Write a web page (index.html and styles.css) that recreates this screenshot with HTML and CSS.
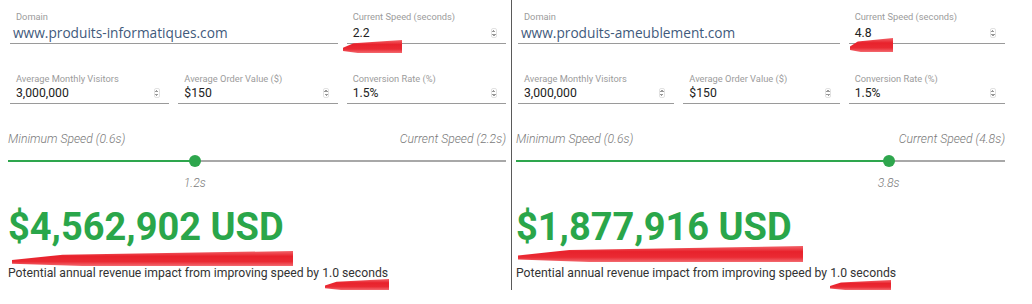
FILE: index.html
```html
<!DOCTYPE html>
<html lang="en">
<head>
    <meta charset="UTF-8">
    <meta name="viewport" content="width=device-width, initial-scale=1.0">
    <title>Speed Revenue Calculator</title>
    <link rel="stylesheet" href="styles.css">
</head>
<body>
    <div class="compare">
        <!-- Site 1 -->
        <section class="panel panel-left">
            <div class="fields">
                <div class="field field-wide">
                    <div class="field-label">Domain</div>
                    <div class="field-value domain">www.produits-informatiques.com</div>
                </div>
                <div class="field">
                    <div class="field-label">Current Speed (seconds)</div>
                    <div class="field-value">2.2 <span class="spin"></span></div>
                </div>
                <div class="field">
                    <div class="field-label">Average Monthly Visitors</div>
                    <div class="field-value">3,000,000 <span class="spin"></span></div>
                </div>
                <div class="field">
                    <div class="field-label">Average Order Value ($)</div>
                    <div class="field-value">$150 <span class="spin"></span></div>
                </div>
                <div class="field">
                    <div class="field-label">Conversion Rate (%)</div>
                    <div class="field-value">1.5% <span class="spin"></span></div>
                </div>
            </div>

            <div class="slider" style="--pos: 37.5%;">
                <div class="slider-ends">
                    <span>Minimum Speed (0.6s)</span>
                    <span>Current Speed (2.2s)</span>
                </div>
                <div class="track">
                    <div class="track-fill"></div>
                    <div class="thumb"></div>
                </div>
                <div class="slider-value"><span>1.2s</span></div>
            </div>

            <div class="impact">$4,562,902 USD</div>
            <p class="impact-note">Potential annual revenue impact from improving speed by 1.0 seconds</p>

            <span class="mark mark-speed"></span>
            <span class="mark mark-impact"></span>
            <span class="mark mark-note"></span>
        </section>

        <!-- Site 2 -->
        <section class="panel panel-right">
            <div class="fields">
                <div class="field field-wide">
                    <div class="field-label">Domain</div>
                    <div class="field-value domain">www.produits-ameublement.com</div>
                </div>
                <div class="field">
                    <div class="field-label">Current Speed (seconds)</div>
                    <div class="field-value">4.8 <span class="spin"></span></div>
                </div>
                <div class="field">
                    <div class="field-label">Average Monthly Visitors</div>
                    <div class="field-value">3,000,000 <span class="spin"></span></div>
                </div>
                <div class="field">
                    <div class="field-label">Average Order Value ($)</div>
                    <div class="field-value">$150 <span class="spin"></span></div>
                </div>
                <div class="field">
                    <div class="field-label">Conversion Rate (%)</div>
                    <div class="field-value">1.5% <span class="spin"></span></div>
                </div>
            </div>

            <div class="slider" style="--pos: 76.2%;">
                <div class="slider-ends">
                    <span>Minimum Speed (0.6s)</span>
                    <span>Current Speed (4.8s)</span>
                </div>
                <div class="track">
                    <div class="track-fill"></div>
                    <div class="thumb"></div>
                </div>
                <div class="slider-value"><span>3.8s</span></div>
            </div>

            <div class="impact">$1,877,916 USD</div>
            <p class="impact-note">Potential annual revenue impact from improving speed by 1.0 seconds</p>

            <span class="mark mark-speed"></span>
            <span class="mark mark-impact"></span>
            <span class="mark mark-note"></span>
        </section>
    </div>
</body>
</html>
```

FILE: styles.css
```css
body {
    margin: 0;
    background-color: #fff;
    font-family: Roboto, "Liberation Sans", sans-serif;
    color: #222;
}
.compare {
    display: flex;
    height: 290px;
}
.panel {
    position: relative;
    overflow: hidden;
    box-sizing: border-box;
    padding-top: 11px;
}
.panel-left {
    width: 512px;
    padding-left: 8px;
    padding-right: 5px;
    border-right: 1px solid #5a5a5a;
}
.panel-right {
    flex: 1;
    padding-left: 4px;
    padding-right: 27px;
}
.fields {
    display: grid;
    grid-template-columns: repeat(3, 1fr);
    column-gap: 9px;
    row-gap: 29px;
    margin-left: 2px;
}
.field {
    border-bottom: 1px solid #9a9a9a;
}
.field-wide {
    grid-column: span 2;
}
.field-label {
    font-size: 9.3px;
    line-height: 12px;
    color: #9c9c9c;
    padding-left: 6px;
}
.field-value {
    display: flex;
    justify-content: space-between;
    align-items: center;
    font-size: 12.2px;
    line-height: 16px;
    padding: 0 0 2px 6px;
}
.fields .field:nth-child(-n+2) .field-value {
    padding-top: 2px;
}
.field-value.domain {
    font-family: "Open Sans", sans-serif;
    font-size: 13.7px;
    color: #3f5a7c;
    padding-left: 3px;
}
.spin {
    width: 4px;
    height: 8px;
    margin-right: 9px;
    border: 1px solid #e2e2e2;
    border-radius: 2px;
    background:
        linear-gradient(135deg, transparent 50%, #9a9a9a 50%) 0 1px / 2px 2px no-repeat,
        linear-gradient(225deg, transparent 50%, #9a9a9a 50%) 2px 1px / 2px 2px no-repeat,
        linear-gradient(45deg, transparent 50%, #9a9a9a 50%) 0 5px / 2px 2px no-repeat,
        linear-gradient(315deg, transparent 50%, #9a9a9a 50%) 2px 5px / 2px 2px no-repeat;
}
.slider {
    margin-top: 28px;
}
.slider-ends {
    display: flex;
    justify-content: space-between;
    font-size: 12.2px;
    line-height: 14px;
    font-style: italic;
    font-weight: 300;
    color: #7a7a7a;
}
.track {
    position: relative;
    height: 2px;
    margin-top: 14px;
    background-color: #a8a8a8;
}
.track-fill {
    width: var(--pos);
    height: 2px;
    background-color: #2ea64d;
}
.thumb {
    position: absolute;
    left: var(--pos);
    top: -5px;
    width: 12px;
    height: 12px;
    margin-left: -6px;
    border-radius: 50%;
    background-color: #2ea64d;
}
.slider-value {
    margin-top: 14px;
    padding-left: var(--pos);
    font-size: 12.2px;
    line-height: 14px;
    font-style: italic;
    font-weight: 300;
    color: #7a7a7a;
}
.slider-value span {
    display: inline-block;
    transform: translateX(-50%);
}
.impact {
    margin-top: 14px;
    font-size: 38px;
    line-height: 46px;
    font-weight: 700;
    color: #2aa64a;
}
.impact-note {
    margin: 15px 0 0;
    font-size: 12.2px;
    line-height: 16px;
    color: #333;
}

/* red brush marks painted over the screenshot */
.mark {
    position: absolute;
    background: linear-gradient(180deg, #f2646a 0%, #e8222c 35%, #ea2a33 70%, #f36a70 100%);
    clip-path: polygon(0 60%, 18% 25%, 100% 0, 100% 100%, 25% 100%, 0 85%);
    filter: blur(0.6px);
}
.panel-left .mark-speed { left: 343px; top: 40px; width: 59px; height: 13px; }
.panel-left .mark-impact { left: 12px; top: 251px; width: 281px; height: 15px; }
.panel-left .mark-note { left: 325px; top: 279px; width: 64px; height: 11px; }
.panel-right .mark-speed { left: 338px; top: 38px; width: 43px; height: 14px; }
.panel-right .mark-impact { left: 6px; top: 246px; width: 285px; height: 16px; }
.panel-right .mark-note { left: 318px; top: 280px; width: 61px; height: 10px; }
```
